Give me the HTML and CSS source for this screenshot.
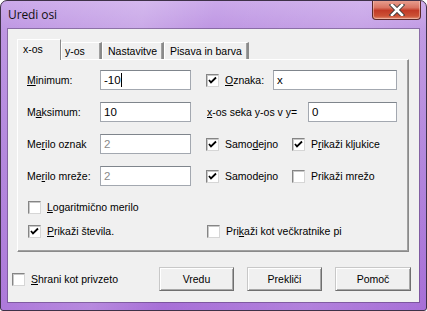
FILE: index.html
```html
<!DOCTYPE html>
<html>
<head>
<meta charset="utf-8">
<link rel="stylesheet" href="styles.css">
</head>
<body>
<div class="window">
  <div class="titlebar">
    <span class="title">Uredi osi</span>
    <div class="close">
      <svg width="18" height="12" viewBox="0 0 18 12"><path d="M4 1 L14 11 M14 1 L4 11" stroke="#3a3a3a" stroke-width="4.4" stroke-linecap="square"/><path d="M4 1 L14 11 M14 1 L4 11" stroke="#ffffff" stroke-width="2.6" stroke-linecap="square"/></svg>
    </div>
  </div>
  <div class="client">
    <div class="tabs">
      <div class="tab active w1">x-os</div>
      <div class="tab w2">y-os</div>
      <div class="tab w3">Nastavitve</div>
      <div class="tab w4">Pisava in barva</div>
    </div>
    <div class="panel">
      <div class="row">
        <span class="lbl"><u>M</u>inimum:</span>
        <div class="input w-left"><span>-10</span><span class="caret"></span></div>
        <div class="right">
          <span class="cb on"><svg width="11" height="11" viewBox="0 0 11 11"><polyline points="2,5 4,7.5 9,2.5" fill="none" stroke="#000" stroke-width="1.8"/></svg></span>
          <span class="cblbl w-ozn"><u>O</u>znaka:</span>
          <div class="input w-ozn-in">x</div>
        </div>
      </div>
      <div class="row">
        <span class="lbl">M<u>a</u>ksimum:</span>
        <div class="input w-left">10</div>
        <div class="right r1">
          <span class="lbl-seka"><u>x</u>-os seka y-os v y=</span>
          <div class="input w-seka">0</div>
        </div>
      </div>
      <div class="row">
        <span class="lbl">Me<u>r</u>ilo oznak</span>
        <div class="input w-left dis">2</div>
        <div class="right">
          <span class="cb on"><svg width="11" height="11" viewBox="0 0 11 11"><polyline points="2,5 4,7.5 9,2.5" fill="none" stroke="#000" stroke-width="1.8"/></svg></span>
          <span class="cblbl w-samo">Samo<u>d</u>ejno</span>
          <span class="cb on"><svg width="11" height="11" viewBox="0 0 11 11"><polyline points="2,5 4,7.5 9,2.5" fill="none" stroke="#000" stroke-width="1.8"/></svg></span>
          <span class="cblbl">P<u>r</u>ikaži kljukice</span>
        </div>
      </div>
      <div class="row">
        <span class="lbl">Me<u>r</u>ilo mreže:</span>
        <div class="input w-left dis">2</div>
        <div class="right">
          <span class="cb on"><svg width="11" height="11" viewBox="0 0 11 11"><polyline points="2,5 4,7.5 9,2.5" fill="none" stroke="#000" stroke-width="1.8"/></svg></span>
          <span class="cblbl w-samo">Samodejno</span>
          <span class="cb"></span>
          <span class="cblbl">Prikaži mrežo</span>
        </div>
      </div>
      <div class="row crow first">
        <span class="cb"></span>
        <span class="cblbl"><u>L</u>ogaritmično merilo</span>
      </div>
      <div class="row crow">
        <div class="half">
          <span class="cb on"><svg width="11" height="11" viewBox="0 0 11 11"><polyline points="2,5 4,7.5 9,2.5" fill="none" stroke="#000" stroke-width="1.8"/></svg></span>
          <span class="cblbl"><u>P</u>rikaži števila.</span>
        </div>
        <span class="cb"></span>
        <span class="cblbl">Pri<u>k</u>aži kot večkratnike pi</span>
      </div>
    </div>
    <div class="bottom">
      <span class="cb"></span>
      <span class="cblbl"><u>S</u>hrani kot privzeto</span>
      <div class="buttons">
        <div class="btn">Vredu</div>
        <div class="btn">Prekliči</div>
        <div class="btn wide">Pomoč</div>
      </div>
    </div>
  </div>
</div>
</body>
</html>
```

FILE: styles.css
```css
html, body {
  margin: 0;
  padding: 0;
  background: #ffffff;
}
.window {
  width: 427px;
  height: 311px;
  box-sizing: border-box;
  border: 1px solid #3e3148;
  border-radius: 7px 7px 3px 3px;
  padding: 0 7px 8px 7px;
  display: flex;
  flex-direction: column;
  overflow: hidden;
  background:
    linear-gradient(100deg, rgba(255,255,255,0) 0%, rgba(255,255,255,0.18) 30%, rgba(255,255,255,0) 45%, rgba(255,255,255,0.12) 75%, rgba(255,255,255,0) 100%),
    linear-gradient(to bottom, #cba9ea 0%, #bd95e2 10%, #b184dc 50%, #a76fd7 100%);
  font-family: "Liberation Sans", Arial, sans-serif;
  font-size: 10.5px;
  color: #000;
}
.titlebar {
  height: 28px;
  display: flex;
  align-items: flex-start;
}
.title {
  font-family: "Open Sans", "Noto Sans", sans-serif;
  font-size: 12px;
  color: #111;
  margin-top: 5px;
  letter-spacing: -0.1px;
}
.close {
  margin-left: auto;
  margin-right: -2px;
  margin-top: -1px;
  width: 49px;
  height: 20px;
  box-sizing: border-box;
  border: 1px solid #5a2a2a;
  border-top: none;
  border-radius: 0 0 4px 4px;
  background: linear-gradient(to bottom, #e9a394 0%, #d97462 40%, #c23a26 55%, #cc5236 85%, #e3937a 100%);
  box-shadow: inset 0 0 0 1px rgba(255,220,210,0.45);
  display: flex;
  align-items: center;
  justify-content: center;
}
.client {
  flex: 1;
  background: #f0f0f0;
  box-shadow: 0 0 0 1px rgba(70, 50, 90, 0.45);
  padding: 10px 8px 0 9px;
  display: flex;
  flex-direction: column;
}
.tabs {
  display: flex;
  align-items: flex-end;
  height: 20px;
  position: relative;
  z-index: 2;
}
.tab {
  box-sizing: border-box;
  height: 17px;
  padding: 2px 0 0 5px;
  border-top: 1px solid #ffffff;
  border-left: 1px solid #ffffff;
  border-right: 2px solid #8a8a8a;
  box-shadow: inset -1px 0 0 #a0a0a0;
  background: #f0f0f0;
  white-space: nowrap;
}
.tab.active {
  height: 21px;
  margin-bottom: -1px;
  padding: 3px 0 0 5px;
  border-right: 1px solid #8a8a8a;
  box-shadow: none;
}
.w1 { width: 44px; }
.w2 { width: 41px; padding-left: 3px; }
.w3 { width: 62px; }
.w4 { width: 85px; }
.panel {
  box-sizing: border-box;
  height: 193px;
  margin-right: 2px;
  border-top: 1px solid #ffffff;
  border-left: 1px solid #ffffff;
  border-right: 1px solid #8a8a8a;
  border-bottom: 1px solid #8a8a8a;
  box-shadow: inset -1px -1px 0 #a0a0a0;
  background: #f0f0f0;
  padding: 10px 0 0 9px;
}
.row {
  display: flex;
  align-items: center;
  height: 20px;
  margin-bottom: 12px;
  white-space: nowrap;
}
.row.crow.first {
  margin-top: -1px;
  margin-bottom: 4px;
}
.row.crow {
  padding-left: 1px;
}
.lbl {
  width: 73px;
}
.input {
  box-sizing: border-box;
  height: 20px;
  background: #ffffff;
  border: 1px solid #a3a8b0;
  border-top-color: #7f858c;
  padding: 0 0 0 3px;
  display: flex;
  align-items: center;
  font-size: 11.5px;
}
.input.dis {
  color: #8a8a8a;
}
.caret {
  display: inline-block;
  width: 1px;
  height: 14px;
  background: #000;
}
.w-left { width: 91px; }
.right {
  display: flex;
  align-items: center;
  margin-left: 15px;
}
.right.r1 {
  margin-left: 16px;
}
.cb {
  box-sizing: border-box;
  width: 13px;
  height: 13px;
  flex: none;
  background: #ffffff;
  border: 1px solid;
  border-color: #858585 #d6d6d6 #d6d6d6 #858585;
  box-shadow: inset 1px 1px 0 #c8c8c8;
  display: flex;
  align-items: center;
  justify-content: center;
}
.cblbl {
  margin-left: 6px;
}
.w-ozn { width: 48px; }
.w-ozn-in { width: 124px; }
.lbl-seka { width: 101px; }
.w-seka { width: 89px; }
.w-samo { width: 67px; }
.half {
  display: flex;
  align-items: center;
  width: 179px;
}
.bottom {
  display: flex;
  align-items: center;
  margin-top: 15px;
  margin-left: -5px;
  white-space: nowrap;
}
.buttons {
  margin-left: auto;
  display: flex;
  gap: 13px;
}
.btn {
  box-sizing: border-box;
  width: 75px;
  height: 24px;
  border: 1px solid;
  border-color: #c8c8c8 #6f6f6f #6f6f6f #c8c8c8;
  box-shadow: inset 1px 1px 0 #ffffff, inset -1px -1px 0 #a8a8a8;
  background: #f0f0f0;
  display: flex;
  align-items: center;
  justify-content: center;
}
.btn.wide {
  width: 76px;
}
```
